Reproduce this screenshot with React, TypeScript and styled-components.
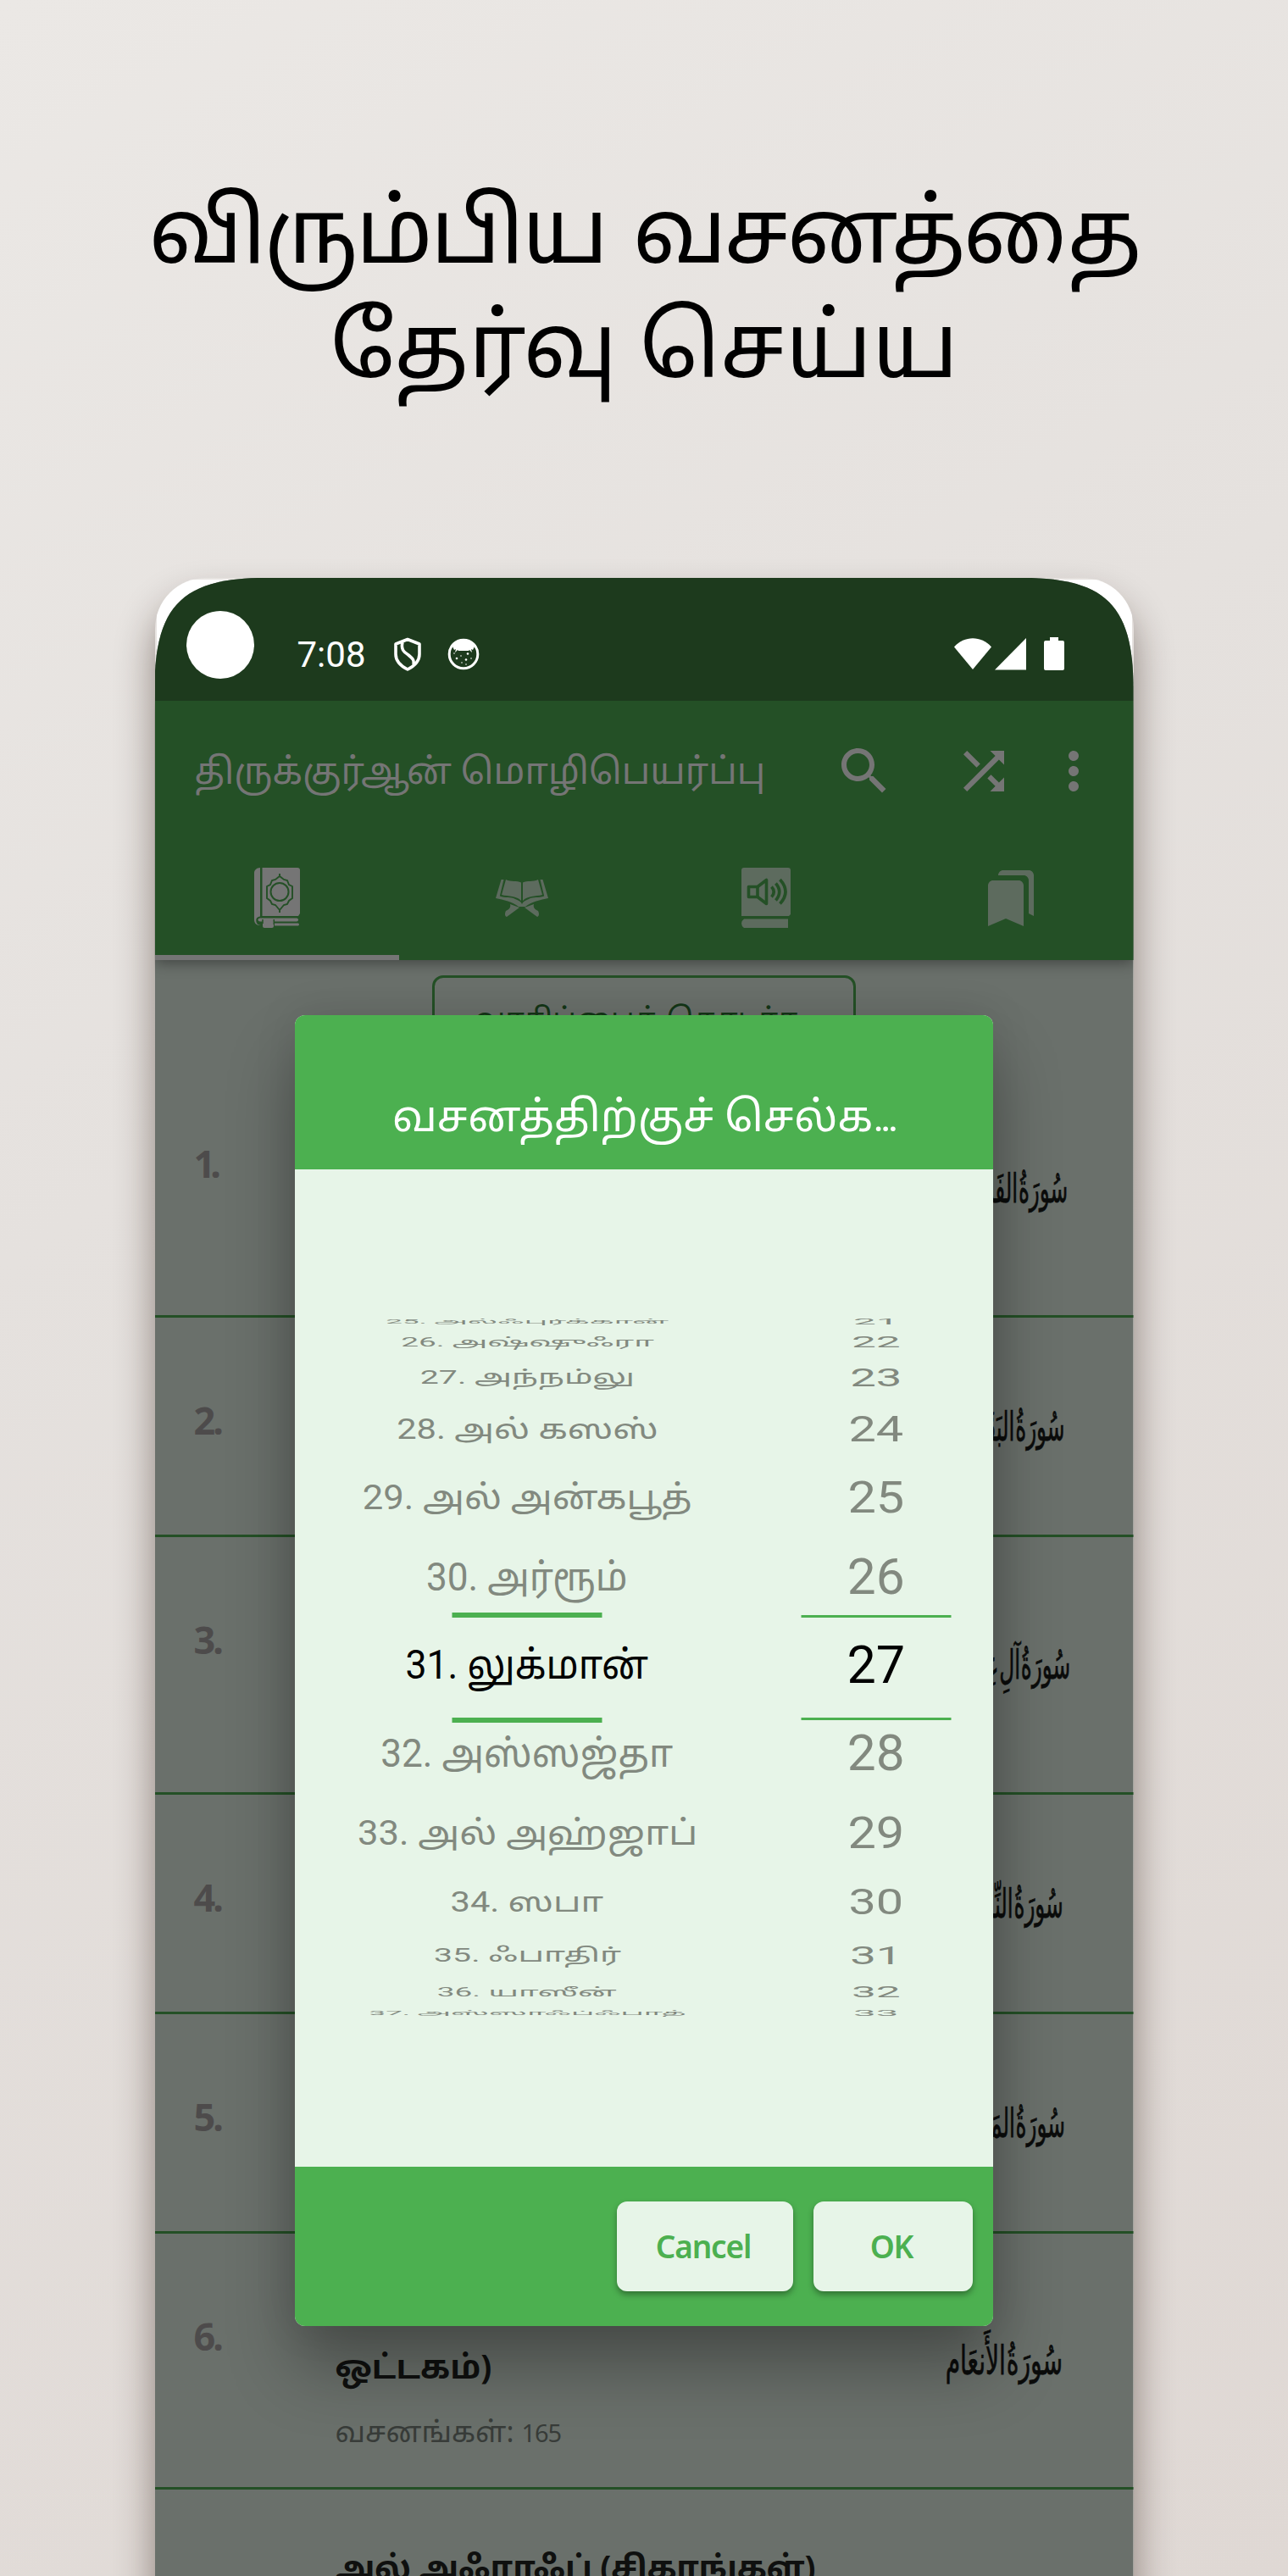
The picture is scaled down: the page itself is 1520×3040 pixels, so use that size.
import React from "react";
import styled, { createGlobalStyle } from "styled-components";

const tamil = `Roboto, "Noto Sans Tamil", "Noto Sans", sans-serif`;
const label = `"Noto Sans", "Noto Sans Tamil", sans-serif`;

const Global = createGlobalStyle`
  *, *::before, *::after { box-sizing: border-box; }
  html, body { margin: 0; padding: 0; }
  body { width: 1520px; height: 3040px; overflow: hidden; }
`;

const Page = styled.main`
  width: 1520px;
  height: 3040px;
  overflow: hidden;
  display: flex;
  flex-direction: column;
  align-items: center;
  background: linear-gradient(150deg, #ebe8e5 0%, #e5e1de 38%, #dfd8d4 100%);
  font-family: ${tamil};
`;

const Headline = styled.h1`
  margin: 0;
  height: 682px;
  flex: none;
  padding-top: 207px;
  font-weight: 400;
  font-size: 106px;
  line-height: 135px;
  text-align: center;
  white-space: nowrap;
  color: #000;
`;

const HeadLine = styled.span<{ $spacing?: number; $gap?: number }>`
  display: block;
  letter-spacing: ${(p) => p.$spacing ?? 0}px;
  word-spacing: ${(p) => p.$gap ?? 0}px;
`;

const Phone = styled.section`
  position: relative;
  width: 1155px;
  height: 2400px;
  flex: none;
  border-radius: 60px 60px 0 0;
  background: linear-gradient(#fff, #fff) 2px 2px / 1151px 200px no-repeat;
  box-shadow: 0 28px 46px rgba(40, 20, 10, 0.46);
`;

const Screen = styled.div`
  position: relative;
  height: 100%;
  display: flex;
  flex-direction: column;
  background: #6a706b;
  clip-path: path("M0 130C0 33 33 0 130 0H1025C1122 0 1155 33 1155 130V2400H0Z");
`;

const StatusBar = styled.header`
  position: relative;
  z-index: 1;
  height: 145px;
  flex: none;
  display: flex;
  align-items: center;
  padding: 10px 82px 0 30px;
  background: #1d3a1d;
  color: #fff;
`;

const Camera = styled.span`
  width: 80px;
  height: 80px;
  margin: 29px 51px 0 7px;
  border-radius: 50%;
  background: #fff;
  align-self: flex-start;
`;

const Clock = styled.time`
  font: 400 42px/1 Roboto, sans-serif;
  margin-top: 26px;
  width: 83px;
`;

const StatusIcons = styled.div<{ $push?: boolean }>`
  display: flex;
  align-items: center;
  gap: ${(p) => (p.$push ? 4 : 30)}px;
  margin-top: 24px;
  margin-left: ${(p) => (p.$push ? "auto" : "30px")};
`;

const BatterySlot = styled.span`
  display: flex;
  margin-left: 17px;
`;

const Toolbar = styled.div`
  height: 306px;
  flex: none;
  display: flex;
  flex-direction: column;
  background: #245026;
  color: #757575;
  position: relative;
  box-shadow: 0 3px 16px rgba(0, 0, 0, 0.4);
`;

const TitleRow = styled.div`
  height: 166px;
  display: flex;
  align-items: center;
  padding: 0 34px 0 47px;
`;

const AppTitle = styled.h2`
  margin: 0;
  width: 754px;
  font-weight: 400;
  font-size: 43px;
  line-height: 60px;
  white-space: nowrap;
`;

const Actions = styled.div`
  display: flex;
  svg { width: 72px; height: 72px; fill: currentColor; }
  svg + svg { margin-left: 69px; }
  svg:last-child { margin-left: 34px; }
`;

const Tabs = styled.nav`
  flex: 1;
  display: grid;
  grid-template-columns: repeat(4, 1fr);
`;

const Tab = styled.div<{ $active?: boolean }>`
  display: flex;
  justify-content: center;
  align-items: flex-start;
  padding-top: 31px;
  color: ${(p) => (p.$active ? "#757575" : "#5d6b5e")};
  border-bottom: ${(p) => (p.$active ? "6px solid #757575" : "0")};
`;

const Content = styled.div`
  flex: 1;
  display: flex;
  flex-direction: column;
  align-items: center;
  min-height: 0;
  overflow: hidden;
`;

const Continue = styled.div`
  margin-top: 18px;
  width: 500px;
  height: 92px;
  flex: none;
  border: 3px solid #245026;
  border-radius: 13px;
  padding-right: 15px;
  text-align: center;
  color: #143617;
  font-size: 35.5px;
  line-height: 98px;
  white-space: nowrap;
`;

const List = styled.ol`
  list-style: none;
  margin: 9px 0 0;
  padding: 0;
  width: 100%;
`;

const Row = styled.li<{ $h: number }>`
  height: ${(p) => p.$h}px;
  display: flex;
  padding: 0 82px 0 46px;
  border-bottom: 3px solid #245026;
`;

const Num = styled.span<{ $tight?: boolean }>`
  width: 167px;
  padding-top: 91px;
  font: 700 45px/60px ${label};
  letter-spacing: ${(p) => (p.$tight ? -6 : -3)}px;
  color: #4d4b4b;
`;

const RowText = styled.div<{ $top?: number }>`
  flex: 1;
  display: flex;
  flex-direction: column;
  padding-top: ${(p) => p.$top ?? 126}px;
  white-space: nowrap;
`;

const SurahName = styled.strong<{ $spacing?: number }>`
  font: 700 38.5px/60px ${label};
  letter-spacing: ${(p) => p.$spacing ?? 0}px;
  color: #0f100f;
`;

const Verses = styled.span`
  margin-top: 17px;
  font: 400 34px/60px ${label};
  color: #383c39;
`;

const Count = styled.span`
  font-size: 29px;
  letter-spacing: -1px;
`;

const Arabic = styled.span<{ $dx: number; $sx?: number }>`
  align-self: center;
  direction: rtl;
  font: 400 38px/60px "DejaVu Sans", sans-serif;
  word-spacing: -11px;
  -webkit-text-stroke: 0.6px #0b0c0b;
  white-space: nowrap;
  color: #0b0c0b;
  transform-origin: right center;
  transform: translate(${(p) => p.$dx}px, 1px) scale(${(p) => p.$sx ?? 0.65}, 1.25);
`;

const Dialog = styled.div`
  position: absolute;
  left: 165px;
  top: 515.5px;
  width: 824px;
  height: 1547px;
  display: flex;
  flex-direction: column;
  border-radius: 12px;
  background: #e7f5e8;
  box-shadow: 0 50px 80px rgba(0, 0, 0, 0.3), 0 0 50px rgba(0, 0, 0, 0.1);
`;

const DialogHeader = styled.div`
  height: 182px;
  flex: none;
  padding-top: 90px;
  border-radius: 12px 12px 0 0;
  background: #4cb050;
  color: #fff;
  text-align: center;
  font-size: 50.5px;
  line-height: 60px;
  white-space: nowrap;
`;

const Dots = styled.span`
  letter-spacing: -4.7px;
`;

const Wheels = styled.div`
  flex: 1;
  display: grid;
  grid-template-columns: 2fr 1fr;
  align-items: center;
`;

const Wheel = styled.div<{ $size: number }>`
  position: relative;
  display: flex;
  flex-direction: column;
  align-items: center;
  font-size: ${(p) => p.$size}px;
  line-height: 1;
`;

const Frame = styled.div<{ $w: number }>`
  position: absolute;
  left: 50%;
  top: 50%;
  width: 177px;
  height: ${(p) => 118 + 2 * p.$w}px;
  transform: translate(-50%, -50%);
  border: solid #4cb050;
  border-width: ${(p) => p.$w}px 0;
`;

const Cell = styled.div<{ $h: number; $sx: number; $sy: number; $on: boolean }>`
  height: ${(p) => p.$h}px;
  display: flex;
  align-items: center;
  white-space: nowrap;
  color: ${(p) => (p.$on ? "#000" : "#82897f")};
  transform: scale(${(p) => p.$sx}, ${(p) => p.$sy}) translateY(-3px);
`;

const DialogFooter = styled.div`
  height: 188px;
  flex: none;
  display: flex;
  justify-content: flex-end;
  gap: 24px;
  padding: 41px 24px;
  border-radius: 0 0 12px 12px;
  background: #4cb050;
`;

const Button = styled.button<{ $w: number }>`
  width: ${(p) => p.$w}px;
  height: 106px;
  border: 0;
  border-radius: 12px;
  padding: 0 8px 0 5px;
  background: #e7f5e8;
  color: #4cb050;
  font: 600 37px/1 ${label};
  letter-spacing: -1.2px;
  box-shadow: 0 4px 7px rgba(0, 0, 0, 0.35);
`;

const heights = [104, 104, 84, 78, 46, 39, 10];
const squash = [1, 0.96, 0.85, 0.69, 0.48, 0.3, 0.14];
const nameWidths = [0.97, 0.96, 0.948, 0.905, 0.853, 0.805, 0.762];
const verseWidths = [0.985, 0.975, 0.96, 0.93, 0.88, 0.83, 0.77];

const surahs = [
  "25. அல்ஃபுர்க்கான்",
  "26. அஷ்ஷுஃரா",
  "27. அந்நம்லு",
  "28. அல் கஸஸ்",
  "29. அல் அன்கபூத்",
  "30. அர்ரூம்",
  "31. லுக்மான்",
  "32. அஸ்ஸஜ்தா",
  "33. அல் அஹ்ஜாப்",
  "34. ஸபா",
  "35. ஃபாதிர்",
  "36. யாஸீன்",
  "37. அஸ்ஸாஃப்ஃபாத்",
];
const verses = surahs.map((_, i) => String(21 + i));

type WheelProps = { items: string[]; size: number; bar: number; widths: number[]; stretch: number };

const PickerWheel = ({ items, size, bar, widths, stretch }: WheelProps) => (
  <Wheel $size={size}>
    <Frame $w={bar} />
    {items.map((t, i) => {
      const d = Math.abs(i - 6);
      return (
        <Cell key={t} $h={heights[d]} $sx={widths[d]} $sy={squash[d] * stretch} $on={d === 0}>
          {t}
        </Cell>
      );
    })}
  </Wheel>
);

const rows = [
  { h: 303, ar: "سُورَةُ الفَاتِحَة", dx: 5 },
  { h: 259, ar: "سُورَةُ البَقَرَة", dx: 1 },
  { h: 303.5, ar: "سُورَةُ آلِ عِمرَان", dx: 8 },
  { h: 259, ar: "سُورَةُ النِّسَاء", dx: -1 },
  { h: 259, ar: "سُورَةُ المَائِدَة", dx: 1 },
  { h: 302.5, ar: "سُورَةُ الأَنعَام", dx: -1, sx: 0.74, name: "ஒட்டகம்)", verses: "165" },
];

const Shield = () => (
  <svg width="34" height="40" viewBox="0 0 34 40" fill="none" stroke="#fff" strokeWidth="3.6" strokeLinejoin="round">
    <path d="M17 2.5 31 8v12c0 8-6 14-14 18C9 34 3 28 3 20V8Z" />
    <path d="M11 6c-2 8 1 11 7 15 5 4 7 6 6 11" />
  </svg>
);

const Face = () => (
  <svg width="38" height="38" viewBox="0 0 38 38">
    <circle cx="19" cy="19" r="16.8" fill="none" stroke="#fff" strokeWidth="3" />
    <path d="M6 10C9 5 13 2 19 2s10 3 13 8l-2 4-2-1 1 4-3-3-1 1H13l-1-1-3 3 1-4-2 1Z" fill="#fff" />
    <g fill="#fff">
      <circle cx="11" cy="24" r="1.3" /><circle cx="22" cy="25.5" r="1.3" /><circle cx="24" cy="18.5" r="1.3" />
      <circle cx="17" cy="29" r=".8" /><circle cx="28" cy="24" r=".8" /><circle cx="16" cy="21" r=".8" />
      <circle cx="8" cy="18" r=".8" /><circle cx="22" cy="31" r=".8" />
    </g>
  </svg>
);

const Wifi = () => (
  <svg width="44" height="38" viewBox="0 0 44 38" fill="#fff">
    <path d="M0 10.5C12-3.200 32-3.200 44 10.500L22 37Z" />
  </svg>
);
const Signal = () => (
  <svg width="37" height="38" viewBox="0 0 37 38" fill="#fff"><path d="M0 37.500 37 0V37.500Z" /></svg>
);
const Battery = () => (
  <BatterySlot>
    <svg width="24" height="39" viewBox="0 0 24 39" fill="#fff">
      <path d="M7 0H17V4H22Q24 4 24 6V37Q24 39 22 39H2Q0 39 0 37V6Q0 4 2 4H7Z" />
    </svg>
  </BatterySlot>
);

const BookIcon = () => (
  <svg width="54" height="72" viewBox="0 0 54 72">
    <path d="M7 0V57.500C3 58 2.300 60 2.300 62.500S4 68 8 68H5C2 67 0 65 0 61V6C0 3 3 0 7 0Z" fill="currentColor" />
    <path d="M9.500 0H51Q54 0 54 3V54L52 57H9.500Z" fill="currentColor" />
    <path d="M7 59.500H50Q52 59.500 52 61.500T50 63.500H7Q4.500 63.500 4.500 61.500T7 59.500Z" fill="currentColor" />
    <path d="M24 65.500H52Q54 67 52 68.500H24Z" fill="currentColor" />
    <path d="M10 62H23V69Q23 71 21 71H12Q10 71 10 69Z" fill="currentColor" />
    <path d="M10 61V66M23.300 61V67" stroke="#245026" strokeWidth="1.5" />
    <path d="M30 7v3l5 4 4 1 2 5 4 2v14l-4 3-2 4-4 1-5 6v3-3l-5-6-4-1-2-4-4-3V22l4-2 2-5 4-1 5-4Z" fill="none" stroke="#245026" strokeWidth="1.9" />
    <circle cx="30" cy="28.5" r="10.5" fill="none" stroke="#245026" strokeWidth="2" />
  </svg>
);

const StandIcon = () => (
  <svg width="62" height="72" viewBox="0 0 62 72" fill="currentColor">
    <path d="M6.500 14H9.500L4.800 33.500C11 36 18 34 23 37 27 38.500 30 40 31 43 32 40 35 38.500 39 37 44 34 51 36 57.200 33.500L52.500 14H55.500L62 36C53 38 42 40 35 46H27C20 40 9 38 0 36Z" />
    <path d="M12 14C18 17 25 15 30 17.500V39C25 33 15 34 7 32ZM50 14C44 17 37 15 32 17.500V39C37 33 47 34 55 32Z" />
    <path d="M17 43 28 47 13 58C10 57 11 53 12 51 16 49 18 47 17 43ZM45 43 34 47 49 58C52 57 51 53 50 51 46 49 44 47 45 43Z" />
  </svg>
);

const AudioIcon = () => (
  <svg width="58" height="72" viewBox="0 0 58 72">
    <path d="M3 0H55Q58 0 58 3V55L56 57H0V3Q0 0 3 0ZM3 60.500H55V71H3Q0 69 0 65.800T3 60.500Z" fill="currentColor" />
    <g fill="none" stroke="#245026" strokeWidth="3.6">
      <path d="M8.500 22.500H19L29.500 14.500V42.500L19 34.500H8.500Z" strokeLinejoin="round" />
      <path d="M19 22V35" />
      <path d="M35.500 22.500Q41 28.500 35.500 34.500M40.500 18.500Q49 28.500 40.500 38.500M45.500 14Q58.500 28.500 45.500 42.500" />
    </g>
  </svg>
);

const BookmarksIcon = () => (
  <svg width="72" height="72" viewBox="0 0 24 24" fill="currentColor">
    <path d="M19 18l2 1V3c0-1.100-.9-2-2-2H8.990C7.890 1 7 1.900 7 3h10c1.100 0 2 .9 2 2v13zM15 5H5c-1.100 0-2 .9-2 2v16l7-3 7 3V7c0-1.100-.9-2-2-2z" />
  </svg>
);

export default function App() {
  return (
    <Page>
      <Global />
      <Headline>
        <HeadLine $spacing={-2.7} $gap={8}>விரும்பிய வசனத்தை</HeadLine>
        <HeadLine>தேர்வு செய்ய</HeadLine>
      </Headline>
      <Phone>
        <Screen>
          <StatusBar>
            <Camera />
            <Clock>7:08</Clock>
            <StatusIcons><Shield /><Face /></StatusIcons>
            <StatusIcons $push><Wifi /><Signal /><Battery /></StatusIcons>
          </StatusBar>
          <Toolbar>
            <TitleRow>
              <AppTitle>திருக்குர்ஆன் மொழிபெயர்ப்பு</AppTitle>
              <Actions>
                <svg viewBox="0 0 24 24"><path d="M15.500 14h-.79l-.28-.27C15.410 12.590 16 11.110 16 9.500 16 5.910 13.090 3 9.500 3S3 5.910 3 9.500 5.910 16 9.500 16c1.610 0 3.090-.59 4.230-1.570l.27.28v.79l5 4.990L20.490 19l-4.990-5zm-6 0C7.010 14 5 11.990 5 9.500S7.010 5 9.500 5 14 7.010 14 9.500 11.990 14 9.500 14z" /></svg>
                <svg viewBox="0 0 24 24"><path d="M10.590 9.170L5.410 4 4 5.410l5.170 5.170 1.420-1.410zM14.500 4l2.040 2.040L4 18.590 5.410 20 17.960 7.460 20 9.500V4h-5.500zm.33 9.410l-1.410 1.410 3.130 3.130L14.500 20H20v-5.500l-2.040 2.040-3.130-3.130z" /></svg>
                <svg viewBox="0 0 24 24"><path d="M12 8c1.100 0 2-.9 2-2s-.9-2-2-2-2 .9-2 2 .9 2 2 2zm0 2c-1.100 0-2 .9-2 2s.9 2 2 2 2-.9 2-2-.9-2-2-2zm0 6c-1.100 0-2 .9-2 2s.9 2 2 2 2-.9 2-2-.9-2-2-2z" /></svg>
              </Actions>
            </TitleRow>
            <Tabs>
              <Tab $active><BookIcon /></Tab>
              <Tab><StandIcon /></Tab>
              <Tab><AudioIcon /></Tab>
              <Tab><BookmarksIcon /></Tab>
            </Tabs>
          </Toolbar>
          <Content>
            <Continue>வாசிப்பைத் தொடர்க</Continue>
            <List>
              {rows.map((r, i) => (
                <Row key={i} $h={r.h}>
                  <Num $tight={i === 0}>{i + 1}.</Num>
                  <RowText>
                    {r.name && <SurahName>{r.name}</SurahName>}
                    {r.verses && <Verses>வசனங்கள்: <Count>{r.verses}</Count></Verses>}
                  </RowText>
                  <Arabic $dx={r.dx} $sx={r.sx}>{r.ar}</Arabic>
                </Row>
              ))}
              <Row $h={259}>
                <Num />
                <RowText $top={61}>
                  <SurahName $spacing={-0.4}>அல் அஃராஃப் (சிகரங்கள்)</SurahName>
                </RowText>
              </Row>
            </List>
          </Content>
          <Dialog>
            <DialogHeader>வசனத்திற்குச் செல்க<Dots>...</Dots></DialogHeader>
            <Wheels>
              <PickerWheel items={surahs} size={46} bar={6} widths={nameWidths} stretch={1.03} />
              <PickerWheel items={verses} size={62} bar={3} widths={verseWidths} stretch={1} />
            </Wheels>
            <DialogFooter>
              <Button $w={208}>Cancel</Button>
              <Button $w={188}>OK</Button>
            </DialogFooter>
          </Dialog>
        </Screen>
      </Phone>
    </Page>
  );
}
